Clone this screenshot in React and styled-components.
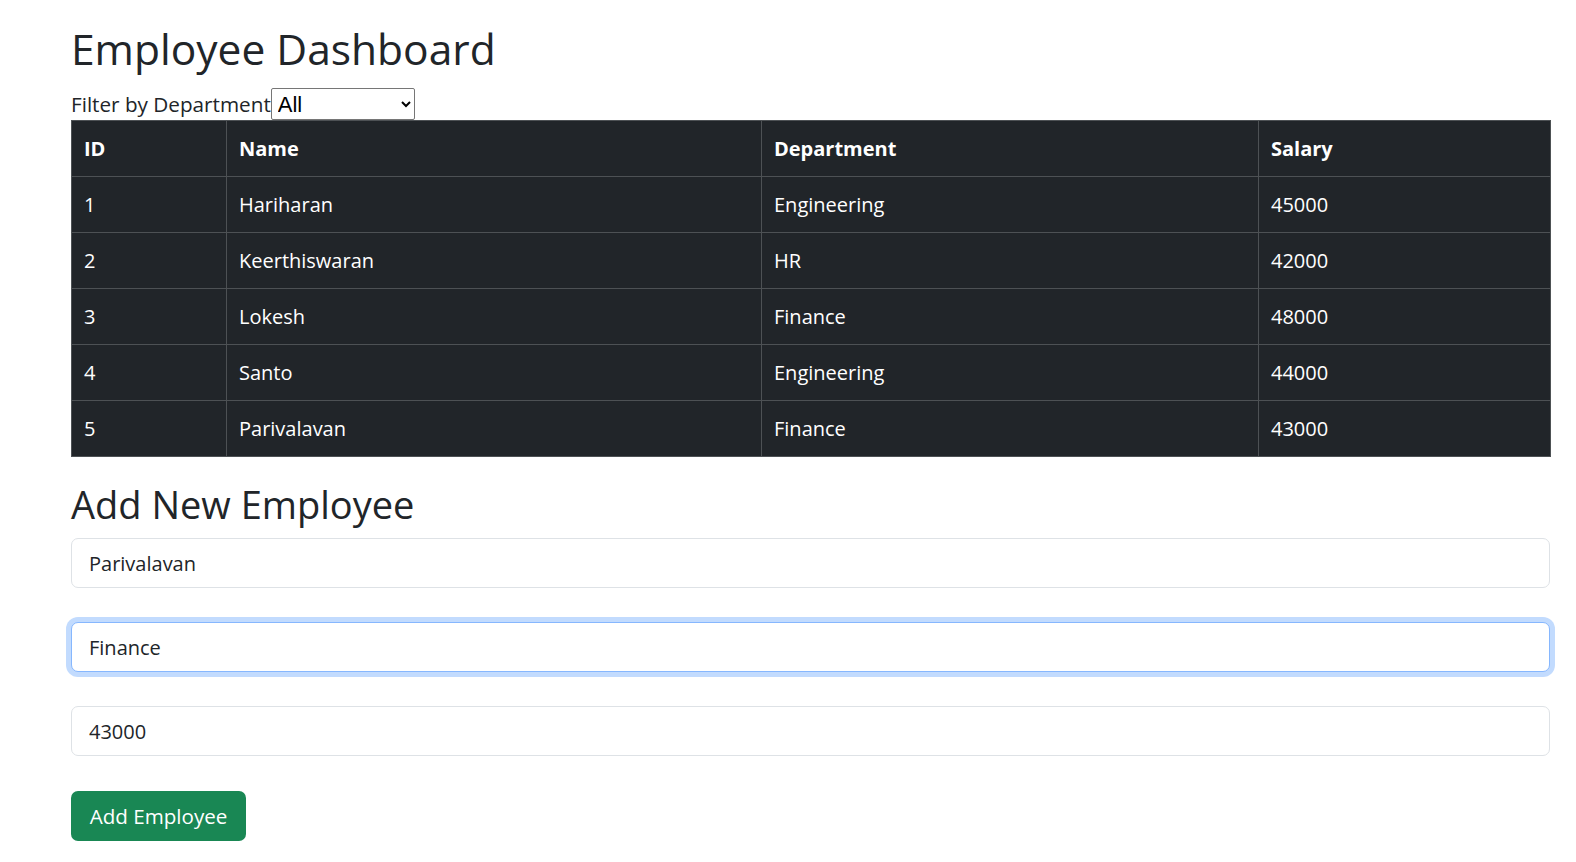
import { useState } from 'react'
import styled, { createGlobalStyle } from 'styled-components'

const GlobalStyle = createGlobalStyle`
    body {
        margin: 0;
        background: #ffffff;
        color: #212529;
        font-family: "Open Sans", "Noto Sans", sans-serif;
        font-size: 20px;
    }
`

const Page = styled.div`
    width: 1479px;
    padding: 24px 0 0 71px;
`

const Title = styled.h1`
    font-size: 42.5px;
    font-weight: 500;
    line-height: 50px;
    margin: 0 0 14px 0;
`

const SubTitle = styled.h2`
    font-size: 38px;
    font-weight: 500;
    line-height: 44px;
    margin: 25px 0 12px 0;
`

const FilterRow = styled.div`
    display: flex;
    align-items: center;
    height: 32px;
`

const FilterLabel = styled.label`
    font-size: 20.7px;
    line-height: 30px;
`

const FilterSelect = styled.select`
    width: 144px;
    height: 32px;
    font-family: "Liberation Sans", Arial, sans-serif;
    font-size: 22px;
    color: #000;
    background: #fff;
    border: 1px solid #767676;
    border-radius: 2px;
    padding: 0 2px;
`

const Table = styled.table`
    width: 1479px;
    border-collapse: collapse;
    background: #212529;
    color: #ffffff;
    table-layout: fixed;
`

const Cell = styled.td`
    border: 1px solid #4d5154;
    height: 55px;
    padding: 0 12px;
    font-size: 20px;
    font-weight: ${props => (props.$head ? 700 : 400)};
    vertical-align: middle;
    text-align: left;
`

const Field = styled.input`
    display: block;
    box-sizing: border-box;
    width: 1479px;
    height: 50px;
    margin-bottom: 34px;
    padding: 0 17px;
    font-family: "Open Sans", "Noto Sans", sans-serif;
    font-size: 20px;
    color: #212529;
    background: #fff;
    border: 1px solid ${props => (props.$focused ? '#86b7fe' : '#dee2e6')};
    border-radius: 7px;
    box-shadow: ${props => (props.$focused ? '0 0 0 5px rgba(13, 110, 253, 0.25)' : 'none')};
    outline: none;
`

const AddButton = styled.button`
    margin-top: 1px;
    width: 175px;
    height: 50px;
    background: #198754;
    color: #fff;
    border: none;
    border-radius: 7px;
    font-family: "Open Sans", "Noto Sans", sans-serif;
    font-size: 20.6px;
`

const employees = [
    { id: 1, name: 'Hariharan', department: 'Engineering', salary: 45000 },
    { id: 2, name: 'Keerthiswaran', department: 'HR', salary: 42000 },
    { id: 3, name: 'Lokesh', department: 'Finance', salary: 48000 },
    { id: 4, name: 'Santo', department: 'Engineering', salary: 44000 },
    { id: 5, name: 'Parivalavan', department: 'Finance', salary: 43000 },
]

export default function App() {
    const [filter, setFilter] = useState('All')
    const [name, setName] = useState('Parivalavan')
    const [department, setDepartment] = useState('Finance')
    const [salary, setSalary] = useState('43000')

    const shown = filter === 'All' ? employees : employees.filter(e => e.department === filter)

    return (
        <Page>
            <GlobalStyle />
            <Title>Employee Dashboard</Title>
            <FilterRow>
                <FilterLabel>Filter by Department</FilterLabel>
                <FilterSelect value={filter} onChange={e => setFilter(e.target.value)}>
                    <option>All</option>
                    <option>Engineering</option>
                    <option>HR</option>
                    <option>Finance</option>
                </FilterSelect>
            </FilterRow>
            <Table>
                <colgroup>
                    <col style={{ width: '155px' }} />
                    <col style={{ width: '535px' }} />
                    <col style={{ width: '497px' }} />
                    <col style={{ width: '292px' }} />
                </colgroup>
                <thead>
                    <tr>
                        <Cell as="th" $head>ID</Cell>
                        <Cell as="th" $head>Name</Cell>
                        <Cell as="th" $head>Department</Cell>
                        <Cell as="th" $head>Salary</Cell>
                    </tr>
                </thead>
                <tbody>
                    {shown.map(emp => (
                        <tr key={emp.id}>
                            <Cell>{emp.id}</Cell>
                            <Cell>{emp.name}</Cell>
                            <Cell>{emp.department}</Cell>
                            <Cell>{emp.salary}</Cell>
                        </tr>
                    ))}
                </tbody>
            </Table>
            <SubTitle>Add New Employee</SubTitle>
            <Field value={name} onChange={e => setName(e.target.value)} />
            <Field $focused value={department} onChange={e => setDepartment(e.target.value)} />
            <Field value={salary} onChange={e => setSalary(e.target.value)} />
            <AddButton>Add Employee</AddButton>
        </Page>
    )
}
